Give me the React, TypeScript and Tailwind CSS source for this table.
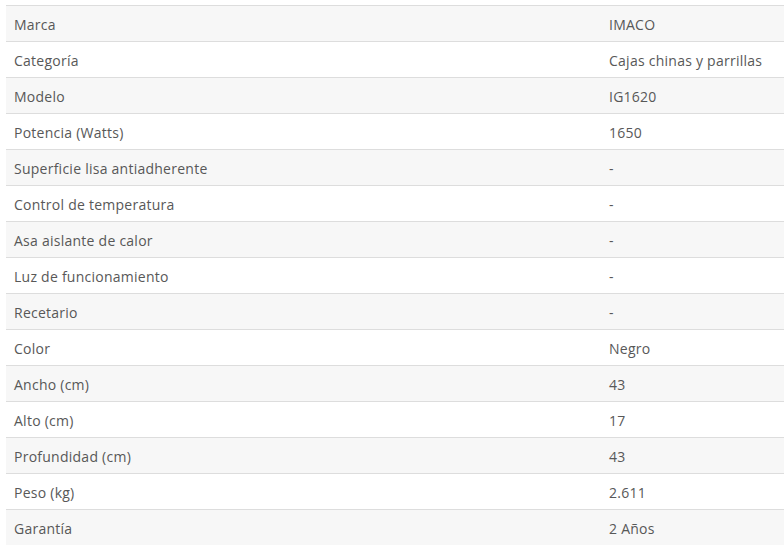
const rows: [string, string][] = [
  ["Marca", "IMACO"],
  ["Categoría", "Cajas chinas y parrillas"],
  ["Modelo", "IG1620"],
  ["Potencia (Watts)", "1650"],
  ["Superficie lisa antiadherente", "-"],
  ["Control de temperatura", "-"],
  ["Asa aislante de calor", "-"],
  ["Luz de funcionamiento", "-"],
  ["Recetario", "-"],
  ["Color", "Negro"],
  ["Ancho (cm)", "43"],
  ["Alto (cm)", "17"],
  ["Profundidad (cm)", "43"],
  ["Peso (kg)", "2.611"],
  ["Garantía", "2 Años"],
];

export default function App() {
  return (
    <div className="w-[784px] h-[557px] bg-white pt-[5px] pl-[6px] overflow-hidden" style={{ fontFamily: '"Open Sans", sans-serif' }}>
      <div className="w-[790px]">
        {rows.map(([k, v], i) => (
          <div
            key={k}
            className={`flex h-[36px] border-t border-[#dddddd] text-[14px] tracking-[0.25px] text-[#585858] ${i % 2 === 0 ? "bg-[#f7f7f7]" : "bg-white"}`}
          >
            <div className="w-[595px] pl-[8px] pt-[1px] flex items-center">{k}</div>
            <div className="flex-1 pl-[8px] pt-[1px] flex items-center">{v}</div>
          </div>
        ))}
      </div>
    </div>
  );
}
